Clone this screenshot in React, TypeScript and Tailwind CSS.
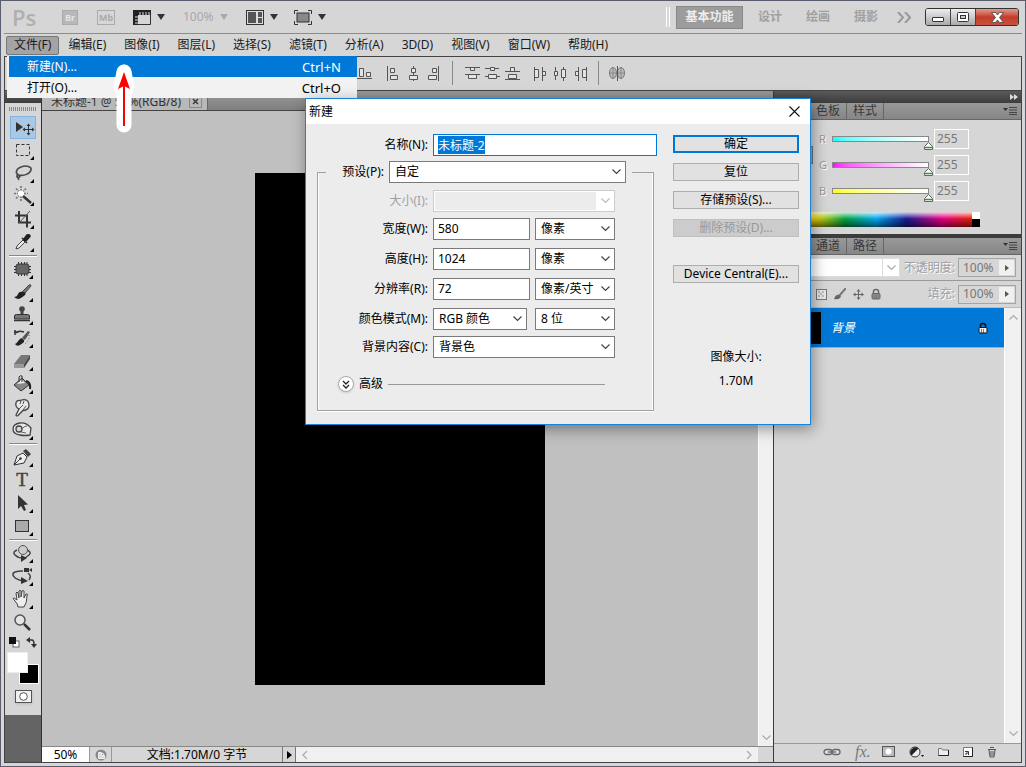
import { useEffect, useRef, useState } from "react";
import type { ReactNode } from "react";

const menus = [
  "编辑(E)",
  "图像(I)",
  "图层(L)",
  "选择(S)",
  "滤镜(T)",
  "分析(A)",
  "3D(D)",
  "视图(V)",
  "窗口(W)",
  "帮助(H)",
];

const channels = [
  { name: "R", track: "from-[#00ffff]" },
  { name: "G", track: "from-[#ff00ff]" },
  { name: "B", track: "from-[#ffff00]" },
];

type Tool = { name: string; icon: ReactNode; single?: boolean };

const toolGroups: Tool[][] = [
  [
    {
      name: "移动",
      single: true,
      icon: (
        <>
          <path d="M6 6v10l7-5z" fill="#333" />
          <path d="M18.5 9v9M14 13.5h9" stroke="#333" />
          <path d="M18.5 7.500l2 2.500h-4zM18.500 19.500l2-2.500h-4zM12.500 13.500l2.500-2v4zM24.500 13.500l-2.500-2v4z" fill="#333" />
        </>
      ),
    },
    {
      name: "选框",
      icon: <rect x="6.500" y="5.500" width="13" height="11" fill="none" stroke="#333" strokeDasharray="3 2" />,
    },
    {
      name: "套索",
      icon: (
        <path
          d="M9 13c-4-1-3.500-6 2-8s11-.5 10 3-7 6.500-12 5c-2-.6-3 2-1 2.500s2.500-2 1-2.500-2 2.500 0 5"
          fill="none"
          stroke="#4a4a4a"
          strokeWidth="1.600"
        />
      ),
    },
    {
      name: "魔棒",
      icon: (
        <>
          <path d="M11 1v5M11 11v5M4 8.500h4M14 8.500h4M6 3.500l3 3M16 3.500l-3 3M6 13.500l3-3" stroke="#777" strokeWidth="1.700" strokeDasharray="2 1" />
          <circle cx="11" cy="8.500" r="3" fill="#fff" />
          <path d="M13 11l8 7" stroke="#333" strokeWidth="2.500" />
        </>
      ),
    },
    {
      name: "裁剪",
      icon: (
        <>
          <path d="M5 7.500h12v12M9 3v11.500h12" fill="none" stroke="#333" strokeWidth="2" />
          <path d="M9 15L20 3" stroke="#555" />
        </>
      ),
    },
    {
      name: "吸管",
      icon: (
        <>
          <path d="M6 18l1-3 6-6 2 2-6 6z" fill="#eee" stroke="#444" />
          <path d="M12 7l5 5M14 8l3-4q3-1 3 1.500l-4 4.500z" fill="#222" stroke="#222" strokeWidth="1.500" />
        </>
      ),
    },
  ],
  [
    {
      name: "修补",
      icon: (
        <>
          <rect x="7" y="6" width="13" height="10" rx="2.500" fill="#666" stroke="#333" />
          <path d="M9.500 4v14M12.500 4v14M15.500 4v14M18 4v14" stroke="#333" strokeDasharray="2 10" />
          <path d="M5 8.500h17M5 11.500h17M5 14.500h17" stroke="#333" strokeDasharray="2 13" />
        </>
      ),
    },
    {
      name: "画笔",
      icon: (
        <>
          <path d="M13 11l7-7q2-1 2 1l-6 7z" fill="#777" stroke="#444" />
          <path d="M5 16q3 0 4-3t5-2 2 3-6 4q-3 0-5-2z" fill="#222" />
        </>
      ),
    },
    {
      name: "图章",
      icon: (
        <>
          <circle cx="13" cy="5" r="2.800" fill="#444" />
          <path d="M11.500 6h3v5h-3z" fill="#444" />
          <path d="M5.500 12q0-1.500 2-1.500h11q2 0 2 1.500v3h-15z" fill="#777" stroke="#333" />
          <path d="M5 16.500h16" stroke="#333" strokeWidth="1.500" />
        </>
      ),
    },
    {
      name: "历史画笔",
      icon: (
        <>
          <path d="M13 11l6-7 2 1-5 8z" fill="#555" />
          <path d="M6 17q2-1 4-4t4-1 1 3-4 3-5-1z" fill="#222" />
          <path d="M15 5q-6-2-8 1M5 5h5M6 3v5" fill="none" stroke="#333" strokeWidth="1.500" />
          <path d="M20 8q1 5-4 9" fill="none" stroke="#555" strokeDasharray="1 2" />
        </>
      ),
    },
    {
      name: "橡皮擦",
      icon: (
        <>
          <path d="M5 14l7-9h9l-6 9z" fill="#777" />
          <path d="M5 14h10v4H5z" fill="#999" />
          <path d="M15 14l6-9v4l-6 9z" fill="#4a4a4a" />
        </>
      ),
    },
    {
      name: "油漆桶",
      icon: (
        <>
          <path d="M5 12l8-7 7 7-8 6z" fill="#888" stroke="#333" />
          <path d="M8 11l5-5 3 4z" fill="#eee" />
          <path d="M10 9V4q1-2 3-1v6" fill="none" stroke="#333" />
          <path d="M17 8q5 1 4 8" fill="none" stroke="#222" strokeWidth="2" />
        </>
      ),
    },
    {
      name: "涂抹",
      icon: (
        <>
          <path
            d="M7 19l3-6q-4-2-3-6.500Q8 4 11 4.500q6-2 8 1 2 4 0 7-2 2-5 2l-5 5q-1.500 1-2-.5z"
            fill="#e8e8e8"
            stroke="#444"
            strokeWidth="1.300"
          />
          <path d="M10 13l4-4M12 5l-1 3M15 5l-1 3M14 14l3-4" stroke="#555" />
        </>
      ),
    },
    {
      name: "海绵",
      icon: (
        <>
          <path d="M21 16l1-7Q17 3 11 4 4 5 4 10t7 6q5 1 10 0z" fill="#e8e8e8" stroke="#444" strokeWidth="1.300" />
          <circle cx="10" cy="10" r="3" fill="#d6d6d6" stroke="#444" strokeWidth="1.300" />
          <path d="M13 10q2-3 5-3M12 13l5 1" fill="none" stroke="#666" />
        </>
      ),
    },
  ],
  [
    {
      name: "钢笔",
      icon: (
        <>
          <path d="M5 19l3-9 6-3 4 4-3 6z" fill="#eee" stroke="#333" />
          <path d="M5 19l6-6" stroke="#333" />
          <circle cx="11.500" cy="12.500" r="1.300" fill="#333" />
          <path d="M14 5l3-2 5 5-3 3z" fill="#444" />
        </>
      ),
    },
    {
      name: "文字",
      icon: (
        <text x="13" y="17" textAnchor="middle" fontFamily="Liberation Serif, serif" fontSize="19" fill="#444" stroke="#444" strokeWidth=".5">
          T
        </text>
      ),
    },
    { name: "路径选择", icon: <path d="M9 3v14l3-3 3 5 2-1-2-5 4-.5z" fill="#333" /> },
    { name: "矩形", icon: <rect x="6.500" y="5.500" width="13" height="11" fill="#aaa" stroke="#333" /> },
  ],
  [
    {
      name: "3D 旋转",
      icon: (
        <>
          <path d="M8 8q-5 2-2 5t8 3M18 8q5 2 2 5l-4 3" fill="none" stroke="#444" strokeWidth="1.500" />
          <circle cx="14" cy="8" r="4.500" fill="#ccc" stroke="#555" />
          <path d="M12 13l6 3-6 4z" fill="#333" />
        </>
      ),
    },
    {
      name: "3D 环绕",
      icon: (
        <>
          <path d="M14 6Q3 6 4 10t10 6M19 8q4 3 1 7" fill="none" stroke="#444" strokeWidth="1.500" />
          <path d="M12 12l7 4-7 3z" fill="#333" />
          <path d="M15 3h5v4h-5zM20 5l3-2v4z" fill="#333" />
        </>
      ),
    },
    {
      name: "抓手",
      icon: (
        <path
          d="M9 19q0-3-3-6t-1-3l3 2-1-7q1-2 2 0l1 5V3q1-1.500 2 0v6l1-6q1.500-1 2 0v7l2-4q2-1 1 2 0 7-3 11z"
          fill="#eee"
          stroke="#444"
        />
      ),
    },
    {
      name: "缩放",
      single: true,
      icon: (
        <>
          <circle cx="11" cy="9" r="5" fill="#e4e4e4" stroke="#555" strokeWidth="1.500" />
          <path d="M15 13l6 6" stroke="#333" strokeWidth="2.500" />
        </>
      ),
    },
  ],
];

const alignIcons = {
  bottom: "M2 15.500h15M4.500 5.500h4v8h-4zM11.500 9.500h4v4h-4z",
  left: "M4.500 3v15M7.500 5.500h4v4h-4zM7.500 12.500h7v4h-7z",
  center: "M10.500 3v2M10.500 10v2M10.500 17v1M8.500 5.500h4v4h-4zM6.500 12.500h8v4h-8z",
  right: "M15.500 3v15M9.500 5.500h4v4h-4zM5.500 12.500h8v4h-8z",
  distTop: "M3 4.500h15M3 11.500h15M8.500 4.500h4v3h-4zM6.500 11.500h8v4h-8z",
  distMiddle: "M3 5.500h5M13 5.500h4M3 13.500h3M15 13.500h3M8.500 4.500h4v3h-4zM6.500 11.500h8v4h-8z",
  distBottom: "M3 8.500h15M3 16.500h15M8.500 4.500h4v4h-4zM6.500 11.500h8v4h-8z",
  distLeft: "M4.500 4v14M12.500 4v14M4.500 6.500h4v8h-4zM12.500 8.500h3v4h-3z",
  distCenter: "M5.500 4v4M5.500 13v4M13.500 4v2M13.500 15v3M4.500 8.500h3v4h-3zM11.500 6.500h4v8h-4z",
  distRight: "M8.500 4v14M16.500 4v14M5.500 8.500h3v4h-3zM12.500 6.500h4v8h-4z",
};

function AlignButton({ kind }: { kind: keyof typeof alignIcons }) {
  return (
    <button aria-label={kind} className="h-5 w-5">
      <svg width="20" height="20" viewBox="0 0 20 20">
        <path d={alignIcons[kind]} fill="#e4e4e4" stroke="#555" />
      </svg>
    </button>
  );
}

function Down({ dim }: { dim?: boolean }) {
  return (
    <svg width="8" height="6" viewBox="0 0 8 6">
      <path d="M0 0h8L4 6z" fill={dim ? "#aaa" : "#333"} />
    </svg>
  );
}

function Chevron({ color }: { color: string }) {
  return (
    <svg width="9" height="6" viewBox="0 0 9 6">
      <path d="M.5.5l4 4 4-4" fill="none" stroke={color} strokeWidth="1.200" />
    </svg>
  );
}

type SelectProps = { id: string; options: string[]; width: string; disabled?: boolean; label?: string };

function Select({ id, options, width, disabled, label }: SelectProps) {
  return (
    <div className={`relative ${width}`}>
      <select
        id={id}
        aria-label={label}
        disabled={disabled}
        className="block h-[22px] w-full appearance-none border border-[#7a7a7a] bg-white px-[5px] text-black outline-none disabled:border-[#ccc] disabled:bg-[#ececec] disabled:shadow-[inset_0_0_0_1px_white]"
      >
        {options.map((o) => (
          <option key={o}>{o}</option>
        ))}
      </select>
      <span
        className={`pointer-events-none absolute inset-y-px right-px flex w-[18px] items-center justify-center ${
          disabled ? "bg-white" : ""
        }`}
      >
        <Chevron color={disabled ? "#bbb" : "#444"} />
      </span>
    </div>
  );
}

function Label({ id, text, dim }: { id: string; text: string; dim?: boolean }) {
  return (
    <label htmlFor={id} className={`w-[110px] shrink-0 text-right ${dim ? "text-[#a0a0a0]" : "text-black"}`}>
      {text}
    </label>
  );
}

function NewDialog() {
  const [name, setName] = useState("未标题-2");
  const nameRef = useRef<HTMLInputElement>(null);

  useEffect(() => {
    nameRef.current?.focus();
    nameRef.current?.select();
  }, []);

  const numberBox = "h-[22px] w-[97px] border border-[#7a7a7a] bg-white px-1 pb-[2px] text-black outline-none";
  const button = "h-[18px] border border-[#adadad] bg-[#e1e1e1] text-black leading-4";

  return (
    <section
      role="dialog"
      aria-label="新建"
      className="absolute top-[97px] left-[304px] w-[506px] border border-[#1883d7] bg-[#ececec] text-xs text-black shadow-[2px_4px_14px_rgba(0,0,0,0.4)]"
    >
      <header className="flex h-[25px] items-center justify-between bg-white pr-2.5 pl-[3px]">
        <h2>新建</h2>
        <button aria-label="关闭">
          <svg width="11" height="11" viewBox="0 0 11 11">
            <path d="M.5.5l10 10M10.500.5l-10 10" stroke="#111" strokeWidth="1.100" />
          </svg>
        </button>
      </header>

      <form className="flex gap-4 px-[11px] pt-2.5 pb-[13px]" onSubmit={(e) => e.preventDefault()}>
        <div className="w-[340px]">
          <div className="flex items-center gap-[5px] pl-px">
            <Label id="name" text="名称(N):" />
            <input
              id="name"
              ref={nameRef}
              value={name}
              onChange={(e) => setName(e.target.value)}
              className="h-[22px] w-[224px] border border-[#0078d7] bg-white px-1 text-black outline-none selection:bg-[#0078d7] selection:text-white"
            />
          </div>

          <fieldset className="mt-[5px] mr-[3px] h-[250px] border border-[#a0a0a0] shadow-[inset_1px_0_white,inset_-1px_0_white,0_1px_white]">
            <legend className="ml-2 flex w-[306px] items-center gap-[5px]">
              <label htmlFor="preset" className="w-[58px] text-right">
                预设(P):
              </label>
              <Select id="preset" options={["自定"]} width="w-[237px]" />
            </legend>

            <div className="flex flex-col gap-2 pt-[7px]">
              <div className="-mb-[2px] flex items-center gap-[5px]">
                <Label id="size" text="大小(I):" dim />
                <Select id="size" options={[""]} width="w-[182px]" disabled />
              </div>
              <div className="flex items-center gap-[5px]">
                <Label id="width" text="宽度(W):" />
                <input id="width" defaultValue="580" className={numberBox} />
                <Select id="width-unit" label="宽度单位" options={["像素"]} width="w-20" />
              </div>
              <div className="flex items-center gap-[5px]">
                <Label id="height" text="高度(H):" />
                <input id="height" defaultValue="1024" className={numberBox} />
                <Select id="height-unit" label="高度单位" options={["像素"]} width="w-20" />
              </div>
              <div className="flex items-center gap-[5px]">
                <Label id="resolution" text="分辨率(R):" />
                <input id="resolution" defaultValue="72" className={numberBox} />
                <Select id="resolution-unit" label="分辨率单位" options={["像素/英寸"]} width="w-20" />
              </div>
              <div className="flex items-center gap-[5px]">
                <Label id="mode" text="颜色模式(M):" />
                <div className="flex w-[182px] justify-between">
                  <Select id="mode" options={["RGB 颜色"]} width="w-[94px]" />
                  <Select id="depth" label="位深" options={["8 位"]} width="w-20" />
                </div>
              </div>
              <div className="-mt-[2px] flex items-center gap-[5px]">
                <Label id="contents" text="背景内容(C):" />
                <Select id="contents" options={["背景色"]} width="w-[182px]" />
              </div>
            </div>

            <div className="mt-[18px] flex items-center gap-[5px] pl-5">
              <button
                aria-label="展开高级"
                className="flex h-4 w-4 items-center justify-center rounded-full border border-[#aaa] bg-white shadow"
              >
                <svg width="8" height="9" viewBox="0 0 8 9">
                  <path d="M1 1l3 3 3-3M1 5l3 3 3-3" fill="none" stroke="#222" strokeWidth="1.300" />
                </svg>
              </button>
              <span>高级</span>
              <span className="h-px w-[217px] bg-[#999]" />
            </div>
          </fieldset>
        </div>

        <div className="flex w-[126px] flex-col gap-2.5 text-center">
          <button className="mt-px h-[18px] border-2 border-[#0078d7] bg-[#e1e1e1] leading-[14px]">确定</button>
          <button className={button}>复位</button>
          <button className={button}>存储预设(S)...</button>
          <button disabled className="h-[18px] border border-[#bfbfbf] bg-[#ccc] leading-4 text-[#999]">
            删除预设(D)...
          </button>
          <button className={`mt-[18px] ${button}`}>Device Central(E)...</button>
          <div className="mt-14 flex flex-col gap-2">
            <p>图像大小:</p>
            <p>1.70M</p>
          </div>
        </div>
      </form>
    </section>
  );
}

function ToolBar() {
  return (
    <aside className="flex w-9 shrink-0 flex-col bg-[#646464]">
      <div className="h-3 bg-gradient-to-b from-[#666] to-[#3a3a3a]" />
      <div className="flex flex-col items-center bg-[#d6d6d6] pb-[9px]">
        <div className="mt-1 mb-[5px] h-1 w-7 bg-[repeating-linear-gradient(90deg,#888_0_1px,#d6d6d6_1px_2px)]" />
        {toolGroups.map((group, g) => (
          <div key={g} className="flex flex-col">
            {g > 0 && <div className="my-px h-[2px] w-7 border-t border-[#888] bg-white" />}
            {group.map((tool, i) => (
              <button
                key={tool.name}
                aria-label={tool.name}
                className={`h-[23px] w-[26px] ${
                  g === 0 && i === 0 ? "bg-[#aac8e4] shadow-[inset_0_0_0_1px_#7eb4e6]" : ""
                }`}
              >
                <svg width="26" height="23" viewBox="0 0 26 23">
                  {tool.icon}
                  {!tool.single && <path d="M24 17v4h-4z" fill="#000" />}
                </svg>
              </button>
            ))}
          </div>
        ))}
        <div className="mt-[3px] flex w-7 justify-between">
          <button aria-label="默认颜色">
            <svg width="11" height="11" viewBox="0 0 11 11">
              <rect x="4" y="4" width="6" height="6" fill="#fff" stroke="#666" />
              <rect width="7" height="7" fill="#111" />
            </svg>
          </button>
          <button aria-label="切换颜色">
            <svg width="11" height="11" viewBox="0 0 11 11">
              <path d="M2 3h4q2 0 2 5" fill="none" stroke="#333" strokeWidth="1.500" />
              <path d="M0 3l4-3v6zM8 11L5 7h6z" fill="#333" />
            </svg>
          </button>
        </div>
        <div className="relative mt-1 h-8 w-8">
          <span className="absolute right-0 bottom-0 h-5 w-5 border border-white bg-black" />
          <span className="absolute top-0 left-0 h-[21px] w-[21px] border border-[#ececec] bg-white" />
        </div>
        <button
          aria-label="快速蒙版"
          className="mt-[6px] flex h-[13px] w-[17px] items-center justify-center border border-[#555] bg-[#f0f0f0] shadow"
        >
          <svg width="9" height="9" viewBox="0 0 9 9">
            <circle cx="4.500" cy="4.500" r="3.800" fill="#fff" stroke="#555" />
          </svg>
        </button>
        <div className="h-[3px]" />
      </div>
    </aside>
  );
}

function PanelTabs({ tabs }: { tabs: string[] }) {
  return (
    <div className="flex h-[17px] items-center border-b border-[#666] bg-gradient-to-b from-[#999] to-[#868686] pr-1 text-[#383838]">
      {tabs.map((t) => (
        <button key={t} className="h-4 w-[37px] border-r border-[#666] leading-4 first:w-9 first:bg-[#d6d6d6]">
          {t}
        </button>
      ))}
      <button aria-label="面板菜单" className="ml-auto">
        <svg width="14" height="8" viewBox="0 0 14 8">
          <path d="M0 1h5L2.500 4z" fill="#333" />
          <path d="M6 .5h8M6 3h8M6 5.500h8M6 7.500h8" stroke="#444" />
        </svg>
      </button>
    </div>
  );
}

function ValueBox({ id }: { id: string }) {
  return (
    <div className="flex h-[19px] w-[58px] border border-[#a4a4a4] p-px">
      <input id={id} defaultValue="100%" className="w-[39px] min-w-0 bg-[#d6d6d6] px-[3px] text-[#777] outline-none" />
      <button aria-label="调整" className="flex flex-1 items-center justify-center bg-[#f0f0f0]">
        <svg width="4" height="6" viewBox="0 0 4 6">
          <path d="M0 0l4 3-4 3z" fill="#555" />
        </svg>
      </button>
    </div>
  );
}

function Lock({ color, body }: { color: string; body: string }) {
  return (
    <svg width="10" height="12" viewBox="0 0 10 12">
      <path d="M2.500 6V3.500q0-2 2.500-2t2.500 2V6" fill="none" stroke={color} strokeWidth="1.500" />
      <rect x="1" y="5.500" width="8" height="5.500" rx="1" fill={body} stroke={color} />
      <path d="M3 8h4M3 10h4" stroke={color} strokeDasharray="1 1" />
    </svg>
  );
}

function RightPanels() {
  return (
    <aside className="flex w-62 shrink-0 flex-col border-l border-[#3a3a3a] bg-[#d6d6d6]">
      <div className="flex h-3 items-center justify-end bg-gradient-to-b from-[#5a5a5a] to-[#3c3c3c] pr-[3px]">
        <svg width="8" height="6" viewBox="0 0 8 6">
          <path d="M0 0l4 3-4 3zM4 0l4 3-4 3z" fill="#ddd" />
        </svg>
      </div>
      <PanelTabs tabs={["颜色", "色板", "样式"]} />
      <div className="h-[114px] pl-1.5">
        <div className="flex">
          <div className="mt-[26px] mr-1.5 h-[18px] w-[33px] border border-[#777] bg-black shadow-[inset_0_0_0_1px_#aaa]" />
          <div className="pt-[9px]">
            {channels.map((c) => (
              <div key={c.name} className="mb-[6px] flex h-5 items-center text-[#999]">
                <label htmlFor={c.name} className="w-[13px] text-[11px] [text-shadow:1px_1px_white]">
                  {c.name}
                </label>
                <div className="relative h-[6px] w-[97px]">
                  <div className={`h-full border border-[#888] bg-gradient-to-r to-white ${c.track}`} />
                  <svg className="absolute top-[6px] -right-1" width="9" height="8" viewBox="0 0 9 8">
                    <path d="M4.500.5l4 4v3h-8v-3z" fill="#fff" stroke="#666" />
                    <path d="M1 5.500h7" stroke="#2a9a2a" strokeWidth="1.500" />
                  </svg>
                </div>
                <input
                  id={c.name}
                  defaultValue="255"
                  className="ml-[5px] h-5 w-[35px] border border-white bg-[#d6d6d6] px-[2px] pb-[2px] text-[#777] outline-none"
                />
              </div>
            ))}
          </div>
        </div>
        <div className="mt-[5px] flex h-[15px] w-[200px]">
          <div className="flex-1 bg-[linear-gradient(to_bottom,rgba(255,255,255,.8),transparent_45%,rgba(0,0,0,.55)),linear-gradient(to_right,red,#ffd800_17%,#00a040_34%,#00a8f0_50%,#1a1a90_66%,#e6007e_85%,#e02000)]" />
          <div className="w-2 border-b-8 border-black bg-white" />
        </div>
      </div>
      <div className="h-1 bg-[#3c3c3c]" />
      <PanelTabs tabs={["图层", "通道", "路径"]} />
      <div className="flex h-[26px] items-center justify-between border-b border-[#999] pr-[5px] pl-1.5 text-[#a0a0a0]">
        <div className="relative">
          <select
            aria-label="混合模式"
            disabled
            className="block h-[19px] w-[120px] appearance-none border border-[#ddd] bg-white opacity-100"
          />
          <span className="pointer-events-none absolute inset-y-0 right-0 flex w-[18px] items-center justify-center border-l border-[#ddd]">
            <Chevron color="#aaa" />
          </span>
        </div>
        <label htmlFor="opacity" className="ml-auto mr-[3px] [text-shadow:1px_1px_white]">
          不透明度:
        </label>
        <ValueBox id="opacity" />
      </div>
      <div className="flex h-[27px] items-center border-b border-[#bbb] pr-[5px] pl-[42px] text-[#a0a0a0]">
        <div className="flex items-center gap-[7px]">
          <svg width="11" height="11" viewBox="0 0 11 11">
            <rect x=".5" y=".5" width="10" height="10" fill="#e8e8e8" stroke="#777" />
            <path d="M2 2h2v2H2zM6 2h2v2H6zM4 4h2v2H4zM2 6h2v2H2zM6 6h2v2H6z" fill="#bbb" />
          </svg>
          <svg width="12" height="12" viewBox="0 0 12 12">
            <path d="M12 0L5 8" stroke="#777" strokeWidth="2" />
            <path d="M0 11q2-5 5-4t1 3-6 1z" fill="#666" />
          </svg>
          <svg width="11" height="11" viewBox="0 0 11 11">
            <path d="M5.500 1v9M1 5.500h9" stroke="#666" />
            <path d="M5.500 0l2 2.500h-4zM5.500 11l2-2.500h-4zM0 5.500l2.500-2v4zM11 5.500l-2.500-2v4z" fill="#666" />
          </svg>
          <Lock color="#666" body="#888" />
        </div>
        <label htmlFor="fill" className="ml-auto mr-[3px] [text-shadow:1px_1px_white]">
          填充:
        </label>
        <ValueBox id="fill" />
      </div>
      <div className="flex flex-1">
        <div className="flex-1">
          <div className="flex h-10 items-center border-b border-[#aaa] bg-[#0078d7] pr-4 text-white">
            <span className="ml-[15px] h-8 w-8 bg-black" />
            <span className="ml-2.5 italic">背景</span>
            <span className="ml-auto">
              <Lock color="#111" body="#eee" />
            </span>
          </div>
        </div>
        <div className="flex w-[17px] flex-col items-center justify-between border-l border-white bg-[#f0f0f0] py-[6px]">
          <span className="rotate-180">
            <Chevron color="#aaa" />
          </span>
          <Chevron color="#aaa" />
        </div>
      </div>
      <div className="flex h-[19px] items-center justify-end gap-[14px] border-t border-[#999] pr-6 pb-[3px]">
        <svg width="18" height="8" viewBox="0 0 18 8">
          <rect x="1" y="1.500" width="8" height="5" rx="2.500" fill="#ddd" stroke="#666" strokeWidth="1.300" />
          <rect x="9" y="1.500" width="8" height="5" rx="2.500" fill="#ddd" stroke="#666" strokeWidth="1.300" />
          <path d="M5 4h8" stroke="#666" strokeWidth="1.300" />
        </svg>
        <span className="w-[13px] font-['Liberation_Serif',serif] text-base leading-4 italic text-[#777]">fx.</span>
        <svg width="13" height="11" viewBox="0 0 13 11">
          <rect x=".5" y=".5" width="12" height="10" fill="#bbb" stroke="#555" />
          <circle cx="6.500" cy="5.500" r="3" fill="#fff" />
        </svg>
        <svg width="15" height="12" viewBox="0 0 15 12">
          <circle cx="6" cy="6" r="5" fill="#eee" stroke="#333" />
          <path d="M2.500 9.500a5 5 0 017-7z" fill="#222" />
          <path d="M12 9h3l-1.500 2z" fill="#111" />
        </svg>
        <svg width="11" height="10" viewBox="0 0 11 10">
          <path d="M.5 8.500v-7h3l1 1.500h6v5.500z" fill="#eee" stroke="#777" />
          <path d="M.5 8.500h10V3" fill="none" stroke="#222" />
        </svg>
        <svg width="10" height="10" viewBox="0 0 10 10">
          <path d="M.5.5h9v9h-9z" fill="#fff" stroke="#777" />
          <path d="M9.500.5v9h-9" fill="none" stroke="#222" />
          <path d="M2 4.500h3.500V8M3 8V6h2" fill="none" stroke="#333" />
        </svg>
        <svg width="10" height="12" viewBox="0 0 10 12">
          <path d="M1 3.500h8M3 1.500h4M2 4l1 7h4l1-7M4 5v5M6 5v5" fill="none" stroke="#555" />
        </svg>
      </div>
    </aside>
  );
}

function DocumentArea() {
  return (
    <main className="flex min-w-0 flex-1 flex-col border-l border-[#333] bg-[#c0c0c0]">
      <div className="flex h-5 items-end border-b border-[#444] bg-gradient-to-b from-[#999] to-[#808080]">
        <div className="flex h-[19px] items-center gap-2 border-r border-[#666] bg-[#b8b8b8] pt-[2px] pr-[5px] pl-[9px] leading-3 text-[#333]">
          <span>未标题-1 @ 50%(RGB/8)</span>
          <button aria-label="关闭文档" className="border border-[#888] p-[2px]">
            <svg width="7" height="7" viewBox="0 0 7 7">
              <path d="M1 1l5 5M6 1L1 6" stroke="#333" strokeWidth="1.300" />
            </svg>
          </button>
        </div>
      </div>
      <div className="flex flex-1">
        <div className="flex flex-1 items-center justify-center">
          <div className="h-[512px] w-[290px] bg-black" />
        </div>
        <div className="flex w-[15px] flex-col items-center justify-end border-l border-white bg-[#f0f0f0] pb-[5px]">
          <Chevron color="#aaa" />
        </div>
      </div>
      <div className="flex h-4 border-t border-[#888] text-black">
        <input aria-label="缩放比例" defaultValue="50%" className="w-[47px] bg-white pt-px text-center outline-none" />
        <button aria-label="版本" className="flex w-[23px] items-center justify-center border-x border-[#999] bg-[#d6d6d6]">
          <svg width="12" height="12" viewBox="0 0 12 12">
            <circle cx="6" cy="6" r="5.500" fill="#888" />
            <path d="M3.500 3.500h3v3h3v3h-6zM6 4q3 0 3 2" fill="#ddd" stroke="#eee" />
          </svg>
        </button>
        <span className="w-[170px] bg-[#d6d6d6] text-center leading-4">文档:1.70M/0 字节</span>
        <button aria-label="状态菜单" className="flex w-[14px] items-center justify-center border-x border-[#777] bg-[#d6d6d6]">
          <svg width="5" height="8" viewBox="0 0 5 8">
            <path d="M0 0l5 4-5 4z" fill="#000" />
          </svg>
        </button>
        <div className="flex flex-1 items-center justify-between bg-[#f0f0f0] px-1">
          <span className="rotate-90">
            <Chevron color="#aaa" />
          </span>
          <span className="-rotate-90">
            <Chevron color="#aaa" />
          </span>
        </div>
        <span className="w-[15px] bg-[#d6d6d6]" />
      </div>
    </main>
  );
}

export default function App() {
  return (
    <div className="relative flex h-screen min-h-[740px] flex-col border border-[#5a5d6e] bg-[#d6d6d6] px-[3px] pb-[3px] font-['Noto_Sans','Noto_Sans_CJK_SC',sans-serif] text-xs select-none">
      <header className="flex h-[33px] shrink-0 items-center border-b border-[#8c8c8c] pr-[3px] pl-2">
        <span className="w-[50px] font-['Open_Sans',sans-serif] text-[22px] leading-8 font-semibold text-[#b0b0b0]">Ps</span>
        <button className="h-[15px] w-4 border border-[#aaa] bg-[#b8b8b8] text-[9px] leading-[14px] font-bold text-[#e4e4e4]">
          Br
        </button>
        <button className="ml-[19px] h-[15px] w-[18px] border border-[#aaa] text-[9px] leading-[14px] font-bold text-[#aaa]">
          Mb
        </button>
        <button aria-label="查看额外内容" className="ml-[18px] flex items-center gap-1.5">
          <svg width="18" height="15" viewBox="0 0 18 15">
            <path d="M0 0h18v5H5v10H0z" fill="#222" />
            <path d="M7 2v3M10 2v3M13 2v3M16 2v3M2 7h3M2 10h3M2 13h3" stroke="#ddd" />
            <path d="M5 14.500h12.500V5" fill="none" stroke="#333" />
          </svg>
          <Down />
        </button>
        <button className="ml-[18px] flex items-center gap-1.5 text-[#a8a8a8]">
          <span>100%</span>
          <Down dim />
        </button>
        <button aria-label="排列文档" className="ml-[18px] flex items-center gap-1.5">
          <svg width="18" height="15" viewBox="0 0 18 15">
            <rect x=".5" y=".5" width="17" height="14" fill="#ddd" stroke="#333" />
            <path d="M2 2h8v11H2zM12 2h4v5h-4zM12 8h4v5h-4z" fill="#555" />
          </svg>
          <Down />
        </button>
        <button aria-label="屏幕模式" className="ml-4 flex items-center gap-1.5">
          <svg width="18" height="15" viewBox="0 0 18 15">
            <path d="M.5 4V.5H4M14 .5h3.500V4M17.500 11v3.500H14M4 14.500H.5V11" fill="none" stroke="#333" />
            <rect x="3" y="3" width="12" height="9" fill="#888" stroke="#333" />
          </svg>
          <Down />
        </button>

        <div className="ml-auto h-5 w-1 border-x border-white" />
        <button className="ml-1.5 h-[23px] w-[67px] border border-[#888] bg-[#9c9c9c] font-bold text-[#eee]">基本功能</button>
        <nav className="ml-[15px] flex gap-6 font-bold text-[#a0a0a0]">
          <button>设计</button>
          <button>绘画</button>
          <button>摄影</button>
        </nav>
        <button aria-label="更多工作区" className="ml-[19px]">
          <svg width="14" height="11" viewBox="0 0 14 11">
            <path d="M1 0l5 5.500L1 11M8 0l5 5.500L8 11" fill="none" stroke="#999" strokeWidth="2" />
          </svg>
        </button>
        <div className="ml-[14px] flex h-[18px] overflow-hidden rounded-[3px] border border-[#333]">
          <button
            aria-label="最小化"
            className="flex w-[25px] items-end justify-center border-r border-[#444] bg-gradient-to-b from-[#eee] to-[#aaa] pb-[3px]"
          >
            <span className="h-[5px] w-3 rounded-[1px] border border-[#333] bg-white" />
          </button>
          <button
            aria-label="最大化"
            className="flex w-[25px] items-center justify-center border-r border-[#444] bg-gradient-to-b from-[#eee] to-[#aaa]"
          >
            <svg width="12" height="10" viewBox="0 0 12 10">
              <rect x=".5" y=".5" width="11" height="9" rx="1" fill="#fff" stroke="#333" />
              <rect x="3.500" y="3.500" width="5" height="3" fill="#ccc" stroke="#333" />
            </svg>
          </button>
          <button
            aria-label="退出"
            className="flex w-[42px] items-center justify-center bg-gradient-to-b from-[#e09a90] via-[#c43c28] to-[#c85040]"
          >
            <svg width="13" height="11" viewBox="0 0 13 11">
              <path d="M.5.5h4l2 2.500 2-2.500h4l-4 5 4 5h-4l-2-2.500-2 2.500h-4l4-5z" fill="#fff" stroke="#444" strokeWidth=".8" />
            </svg>
          </button>
        </div>
      </header>

      <nav className="flex h-[22px] shrink-0 items-center pl-[2px] text-[#1a1a1a]">
        <button className="h-[19px] rounded-[2px] border border-[#777] bg-[#a4a4a4] px-[7px]">文件(F)</button>
        {menus.map((m) => (
          <button key={m} className="px-[9px]">
            {m}
          </button>
        ))}
      </nav>

      <div className="flex flex-1 flex-col border border-[#444]">
        <div className="flex h-[34px] shrink-0 items-center border-b border-[#444] pb-[2px] pl-[350px]">
          <AlignButton kind="bottom" />
          <div className="ml-2 flex">
            <AlignButton kind="left" />
            <AlignButton kind="center" />
            <AlignButton kind="right" />
          </div>
          <span className="mx-[9px] h-6 w-px bg-[#888]" />
          <AlignButton kind="distTop" />
          <AlignButton kind="distMiddle" />
          <AlignButton kind="distBottom" />
          <div className="ml-2 flex">
            <AlignButton kind="distLeft" />
            <AlignButton kind="distCenter" />
            <AlignButton kind="distRight" />
          </div>
          <span className="mx-2 h-6 w-px bg-[#888]" />
          <button aria-label="自动对齐图层">
            <svg width="20" height="20" viewBox="0 0 20 20">
              <ellipse cx="6" cy="10" rx="3.500" ry="5.500" fill="#bbb" stroke="#777" />
              <ellipse cx="14" cy="10" rx="3.500" ry="5.500" fill="#bbb" stroke="#777" />
              <path d="M3 10h14M6 5v10M14 5v10" stroke="#888" />
              <path d="M10.500 3v15" stroke="#555" />
            </svg>
          </button>
        </div>

        <div className="flex flex-1">
          <ToolBar />
          <DocumentArea />
          <RightPanels />
        </div>
      </div>

      <div className="absolute top-[55px] left-[6px] w-[350px] border-l-2 border-[#f2f2f2] bg-[#f2f2f2] leading-3 text-black">
        <button className="flex h-[21px] w-full items-center justify-between bg-[#0078d7] pr-4 pl-[18px] text-white">
          <span>新建(N)...</span>
          <span className="text-[13px]">Ctrl+N</span>
        </button>
        <button className="flex h-[21px] w-full items-center justify-between pr-4 pl-[18px]">
          <span>打开(O)...</span>
          <span className="text-[13px]">Ctrl+O</span>
        </button>
      </div>

      <svg className="pointer-events-none absolute top-[63px] left-[111px]" width="24" height="70" viewBox="0 0 24 70">
        <path d="M12 8v53M12 8l-3 16h6z" stroke="#fff" strokeWidth="15" strokeLinecap="round" strokeLinejoin="round" />
        <path d="M12 20v42" stroke="#f00" strokeWidth="2" />
        <path d="M12 8l6 17-6-3-6 3z" fill="#f00" />
      </svg>

      <NewDialog />
    </div>
  );
}
